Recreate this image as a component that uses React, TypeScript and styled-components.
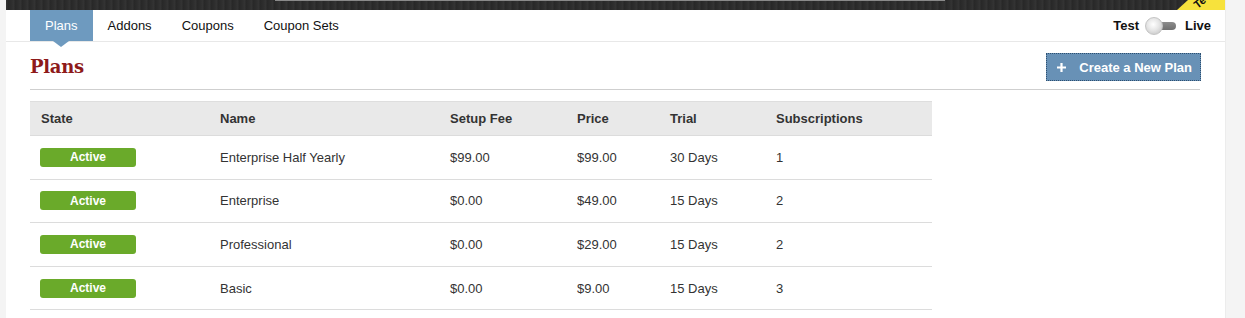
import { FC } from 'react'
import styled, { createGlobalStyle } from 'styled-components'

const GlobalStyle = createGlobalStyle`
  html, body {
    margin: 0;
    padding: 0;
    background: #f4f4f4;
  }
  body {
    font-family: 'Liberation Sans', Arial, sans-serif;
    font-size: 13px;
    color: #333;
  }
`

const Shell = styled.div`
  margin: 0 19px 0 6px;
  min-height: 318px;
  background: #ffffff;
  border-right: 1px solid #ececec;
`

const TopBar = styled.div`
  position: relative;
  height: 10px;
  overflow: hidden;
  display: flex;
  background-color: #2b2b2b;
  background-image: repeating-linear-gradient(
    90deg,
    rgba(255, 255, 255, 0.04) 0px,
    rgba(255, 255, 255, 0.04) 1px,
    rgba(0, 0, 0, 0.08) 2px,
    rgba(0, 0, 0, 0) 4px,
    rgba(255, 255, 255, 0.03) 7px
  );
`

const BarEdge = styled.div`
  margin-left: 269px;
  width: 670px;
  height: 1px;
  background: #8a8a8a;
`

const Ribbon = styled.div`
  position: absolute;
  top: 0;
  right: 0;
  width: 48px;
  height: 10px;
  background: #f7e23c;
  clip-path: polygon(11px 0, 100% 0, 100% 100%, 0 100%);
  overflow: hidden;
`

const RibbonText = styled.span`
  position: absolute;
  left: 17px;
  top: -3px;
  font-size: 11px;
  font-weight: bold;
  line-height: 11px;
  color: #111;
  transform: rotate(-38deg);
`

const TabBar = styled.div`
  display: flex;
  align-items: stretch;
  justify-content: space-between;
  height: 31px;
  padding: 0 14px 0 24px;
  border-bottom: 1px solid #e8e8e8;
`

const Tabs = styled.ul`
  display: flex;
  margin: 0;
  padding: 0;
  list-style: none;
`

const Tab = styled.li<{ $active?: boolean }>`
  position: relative;
  display: flex;
  align-items: center;
  padding: 0 15px;
  font-size: 13px;
  color: ${({ $active }) => ($active ? '#ffffff' : '#111')};
  background: ${({ $active }) => ($active ? '#6e9abf' : 'transparent')};
  &::after {
    content: '';
    display: ${({ $active }) => ($active ? 'block' : 'none')};
    position: absolute;
    left: 50%;
    bottom: -6px;
    margin-left: -8px;
    border-left: 8px solid transparent;
    border-right: 8px solid transparent;
    border-top: 6px solid #6e9abf;
  }
`

const ModeSwitch = styled.div`
  display: flex;
  align-items: center;
  gap: 7px;
  font-weight: bold;
  font-size: 13px;
  color: #111;
`

const Track = styled.span`
  display: flex;
  align-items: center;
  width: 30px;
  height: 8px;
  margin-right: 2px;
  border-radius: 4px;
  background: linear-gradient(#8c8c8c, #6f6f6f);
`

const Knob = styled.span`
  width: 18px;
  height: 18px;
  margin-left: -1px;
  border-radius: 50%;
  border: 1px solid #c4c4c4;
  box-sizing: border-box;
  background: radial-gradient(circle at 45% 40%, #ffffff 0%, #e6e6e6 45%, #bdbdbd 100%);
`

const PageHeader = styled.div`
  display: flex;
  align-items: center;
  justify-content: space-between;
  height: 47px;
  margin: 0 25px 0 24px;
  border-bottom: 1px solid #cfcfcf;
`

const Title = styled.h1`
  margin: 0;
  padding-top: 2px;
  font-family: 'DejaVu Serif', Georgia, serif;
  font-size: 18px;
  font-weight: bold;
  color: #8e1a1a;
  letter-spacing: -0.3px;
`

const NewButton = styled.button`
  display: flex;
  align-items: center;
  gap: 13px;
  height: 28px;
  margin-top: 3px;
  margin-right: -1px;
  padding: 0 8px 0 10px;
  border: 1px dotted #2d4f70;
  background: #6891b6;
  color: #ffffff;
  font-family: 'Liberation Sans', Arial, sans-serif;
  font-size: 13px;
  font-weight: bold;
  cursor: pointer;
`

const Table = styled.table`
  width: 902px;
  margin: 11px 0 0 24px;
  border-collapse: collapse;
  table-layout: fixed;
`

const HeadCell = styled.th<{ $width?: number }>`
  box-sizing: border-box;
  width: ${({ $width }) => ($width ? `${$width}px` : 'auto')};
  height: 34px;
  padding: 0 0 1px 11px;
  text-align: left;
  font-size: 13px;
  font-weight: bold;
  color: #333;
  background: #e9e9e9;
  border-top: 1px solid #dedede;
  border-bottom: 1px solid #dcdcdc;
`

const Cell = styled.td`
  box-sizing: border-box;
  height: 43.6px;
  padding: 0 0 0 11px;
  font-size: 13px;
  color: #333;
  border-bottom: 1px solid #dcdcdc;
`

const StateBadge = styled.span`
  display: flex;
  align-items: center;
  justify-content: center;
  width: 96px;
  height: 19px;
  margin-left: -1px;
  border-radius: 3px;
  background: #6aaa2a;
  color: #ffffff;
  font-size: 12px;
  font-weight: bold;
`

type Plan = {
  name: string
  setupFee: string
  price: string
  trial: string
  subscriptions: number
}

const plans: Plan[] = [
  { name: 'Enterprise Half Yearly', setupFee: '$99.00', price: '$99.00', trial: '30 Days', subscriptions: 1 },
  { name: 'Enterprise', setupFee: '$0.00', price: '$49.00', trial: '15 Days', subscriptions: 2 },
  { name: 'Professional', setupFee: '$0.00', price: '$29.00', trial: '15 Days', subscriptions: 2 },
  { name: 'Basic', setupFee: '$0.00', price: '$9.00', trial: '15 Days', subscriptions: 3 }
]

const PlusIcon: FC = () => (
  <svg width="9" height="9" viewBox="0 0 9 9">
    <path d="M4.5 0v9M0 4.5h9" stroke="#ffffff" strokeWidth="2.2" />
  </svg>
)

const App: FC = () => {
  return (
    <>
      <GlobalStyle />
      <Shell>
        <TopBar>
          <BarEdge />
          <Ribbon>
            <RibbonText>Te</RibbonText>
          </Ribbon>
        </TopBar>
        <TabBar>
          <Tabs>
            <Tab $active>Plans</Tab>
            <Tab>Addons</Tab>
            <Tab>Coupons</Tab>
            <Tab>Coupon Sets</Tab>
          </Tabs>
          <ModeSwitch>
            <span>Test</span>
            <Track>
              <Knob />
            </Track>
            <span>Live</span>
          </ModeSwitch>
        </TabBar>
        <PageHeader>
          <Title>Plans</Title>
          <NewButton>
            <PlusIcon />
            Create a New Plan
          </NewButton>
        </PageHeader>
        <Table>
          <thead>
            <tr>
              <HeadCell $width={179}>State</HeadCell>
              <HeadCell $width={230}>Name</HeadCell>
              <HeadCell $width={127}>Setup Fee</HeadCell>
              <HeadCell $width={93}>Price</HeadCell>
              <HeadCell $width={106}>Trial</HeadCell>
              <HeadCell>Subscriptions</HeadCell>
            </tr>
          </thead>
          <tbody>
            {plans.map((plan) => (
              <tr key={plan.name}>
                <Cell>
                  <StateBadge>Active</StateBadge>
                </Cell>
                <Cell>{plan.name}</Cell>
                <Cell>{plan.setupFee}</Cell>
                <Cell>{plan.price}</Cell>
                <Cell>{plan.trial}</Cell>
                <Cell>{plan.subscriptions}</Cell>
              </tr>
            ))}
          </tbody>
        </Table>
      </Shell>
    </>
  )
}

export default App
